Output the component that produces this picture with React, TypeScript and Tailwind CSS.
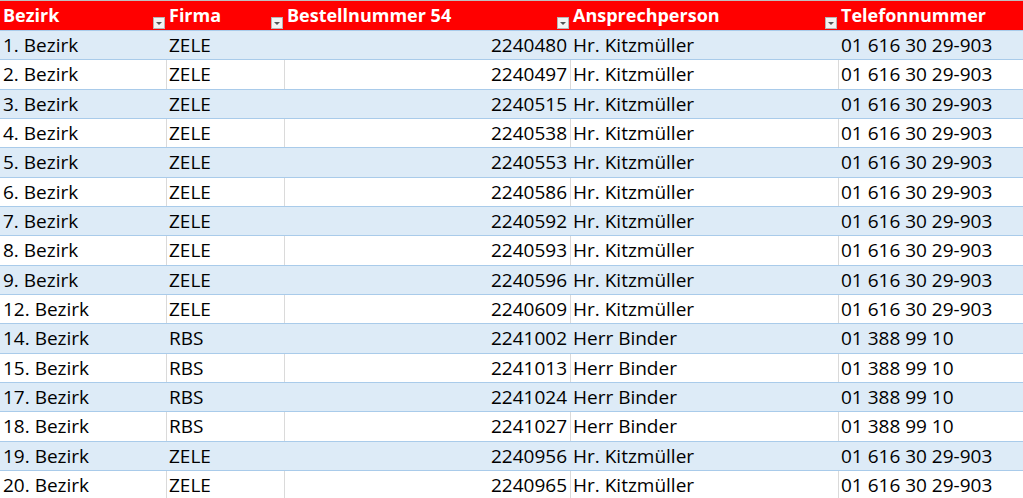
const ROWS: [string, string, string, string, string][] = [
  ["1. Bezirk", "ZELE", "2240480", "Hr. Kitzmüller", "01 616 30 29-903"],
  ["2. Bezirk", "ZELE", "2240497", "Hr. Kitzmüller", "01 616 30 29-903"],
  ["3. Bezirk", "ZELE", "2240515", "Hr. Kitzmüller", "01 616 30 29-903"],
  ["4. Bezirk", "ZELE", "2240538", "Hr. Kitzmüller", "01 616 30 29-903"],
  ["5. Bezirk", "ZELE", "2240553", "Hr. Kitzmüller", "01 616 30 29-903"],
  ["6. Bezirk", "ZELE", "2240586", "Hr. Kitzmüller", "01 616 30 29-903"],
  ["7. Bezirk", "ZELE", "2240592", "Hr. Kitzmüller", "01 616 30 29-903"],
  ["8. Bezirk", "ZELE", "2240593", "Hr. Kitzmüller", "01 616 30 29-903"],
  ["9. Bezirk", "ZELE", "2240596", "Hr. Kitzmüller", "01 616 30 29-903"],
  ["12. Bezirk", "ZELE", "2240609", "Hr. Kitzmüller", "01 616 30 29-903"],
  ["14. Bezirk", "RBS", "2241002", "Herr Binder", "01 388 99 10"],
  ["15. Bezirk", "RBS", "2241013", "Herr Binder", "01 388 99 10"],
  ["17. Bezirk", "RBS", "2241024", "Herr Binder", "01 388 99 10"],
  ["18. Bezirk", "RBS", "2241027", "Herr Binder", "01 388 99 10"],
  ["19. Bezirk", "ZELE", "2240956", "Hr. Kitzmüller", "01 616 30 29-903"],
  ["20. Bezirk", "ZELE", "2240965", "Hr. Kitzmüller", "01 616 30 29-903"],
];

const HEAD = ["Bezirk", "Firma", "Bestellnummer 54", "Ansprechperson", "Telefonnummer"];

// excel autofilter dropdown
function Filter() {
  return (
    <span className="absolute right-[1px] bottom-[1px] w-[12px] h-[12px] bg-[#f3f3f3] border border-[#b5b5b5] grid place-items-center">
      <svg width="6" height="3" viewBox="0 0 6 3"><path d="M0 0h6L3 3z" fill="#555" /></svg>
    </span>
  );
}

export default function App() {
  const cols = "grid grid-cols-[166px_118px_286px_268px_1fr]";
  return (
    <div className="w-[1023px] h-[498px] overflow-hidden bg-white text-[19px] text-black" style={{ fontFamily: '"Open Sans", "Liberation Sans", sans-serif' }}>
      <div className={`${cols} h-[30px] bg-[#ff0000] border-t border-[#bfbfbf] text-white text-[18px] font-bold leading-[28px]`}>
        {HEAD.map((h, i) => (
          <div key={h} className="relative px-[3px] whitespace-nowrap">
            {h}
            {i < 4 && <Filter />}
          </div>
        ))}
      </div>
      {ROWS.map((r, i) => (
        <div key={i} className={`${cols} h-[29.33px] border-t border-[#a9cbea] leading-[28px] ${i % 2 === 0 ? "bg-[#ddebf7]" : "bg-white"}`}>
          {r.map((c, j) => (
            <div key={j} className={`pr-[3px] whitespace-nowrap ${j === 2 ? "text-right" : ""} ${i % 2 === 1 && j > 0 ? "border-l border-[#dadada] pl-[2px]" : "pl-[3px]"}`}>
              {c}
            </div>
          ))}
        </div>
      ))}
    </div>
  );
}
